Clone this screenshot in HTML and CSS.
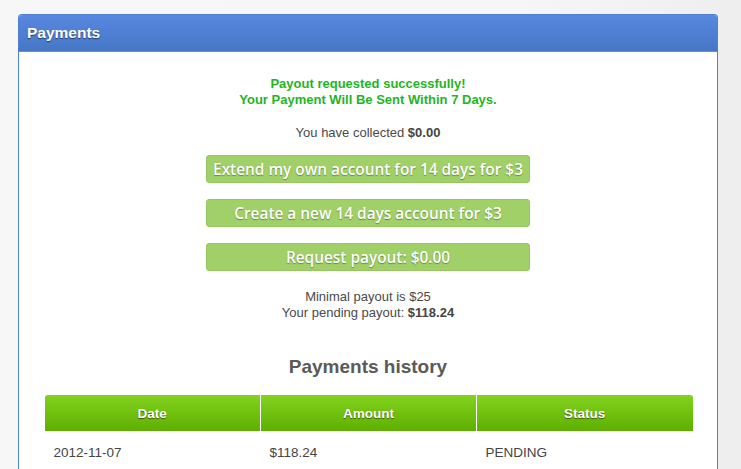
FILE: index.html
```html
<!DOCTYPE html>
<html>
<head>
<meta charset="utf-8">
<link rel="stylesheet" href="styles.css">
</head>
<body>
<div class="panel">
  <div class="panel-head">Payments</div>
  <div class="panel-body">
    <div class="success">Payout requested successfully!<br>Your Payment Will Be Sent Within 7 Days.</div>
    <p class="collected">You have collected <b>$0.00</b></p>
    <div class="buttons">
      <button class="btn">Extend my own account for 14 days for $3</button>
      <button class="btn">Create a new 14 days account for $3</button>
      <button class="btn">Request payout: $0.00</button>
    </div>
    <p class="info">Minimal payout is $25<br>Your pending payout: <b>$118.24</b></p>
    <h2 class="history">Payments history</h2>
    <table class="tbl">
      <thead>
        <tr><th>Date</th><th>Amount</th><th>Status</th></tr>
      </thead>
      <tbody>
        <tr><td>2012-11-07</td><td>$118.24</td><td>PENDING</td></tr>
      </tbody>
    </table>
  </div>
</div>
</body>
</html>
```
FILE: styles.css
```css
html, body {
  margin: 0;
  padding: 0;
}
body {
  width: 741px;
  height: 469px;
  overflow: hidden;
  background: linear-gradient(90deg, #f7f7f7 0%, #f6f6f6 70%, #eeeeee 100%);
  font-family: "Liberation Sans", Arial, sans-serif;
  color: #555;
  padding: 14px 0 0 18px;
  box-sizing: border-box;
}
.panel {
  width: 700px;
  height: 455px;
  overflow: hidden;
  background: #fff;
  border: 1px solid #4f7fd6;
  border-bottom: none;
  border-radius: 4px 4px 0 0;
  box-sizing: border-box;
}
.panel-head {
  height: 37px;
  margin: -1px -1px 0 -1px;
  border-radius: 4px 4px 0 0;
  background: linear-gradient(#5888e0, #4677c6);
  border-bottom: 1px solid #5f8fe0;
  color: #fff;
  font-weight: bold;
  font-size: 15.5px;
  line-height: 37px;
  padding-left: 9px;
  text-shadow: 0 1px 1px #2a3a60;
}
.panel-body {
  display: flex;
  flex-direction: column;
  align-items: center;
  padding-top: 24px;
}
.success {
  color: #1fb51f;
  font-weight: bold;
  font-size: 13px;
  line-height: 16px;
  text-align: center;
}
.collected {
  margin: 17px 0 0 0;
  font-size: 13px;
  line-height: 16px;
  color: #4a4a4a;
}
.collected b, .info b { color: #444; }
.buttons {
  display: flex;
  flex-direction: column;
  gap: 16px;
  margin-top: 14px;
}
.btn {
  width: 324px;
  height: 28px;
  border: 1px solid #97c760;
  border-radius: 3px;
  background: #a1d068;
  color: #fff;
  font-family: "Open Sans", sans-serif;
  font-weight: 600;
  font-size: 15.4px;
  text-shadow: 0 1px 1px rgba(60, 90, 30, 0.6);
  padding: 0;
}
.info {
  margin: 18px 0 0 0;
  font-size: 13px;
  line-height: 16px;
  text-align: center;
  color: #4a4a4a;
}
.history {
  margin: 34px 0 0 0;
  font-size: 19px;
  line-height: 24px;
  color: #5a5a5a;
}
.tbl {
  margin-top: 16px;
  width: 648px;
  border-collapse: collapse;
  margin-left: 1px;
  font-size: 13.5px;
}
.tbl th {
  width: 33.33%;
  height: 36px;
  padding: 0;
  background: linear-gradient(#84d21f, #5daf00);
  color: #fff;
  font-weight: bold;
  text-shadow: 0 1px 1px #3a5a10;
  border-left: 1px solid #fff;
}
.tbl th:first-child { border-left: none; border-radius: 3px 0 0 0; }
.tbl th:last-child { border-radius: 0 3px 0 0; }
.tbl td {
  padding: 14px 9px;
  font-size: 13.5px;
  color: #444;
  text-align: left;
}
```
